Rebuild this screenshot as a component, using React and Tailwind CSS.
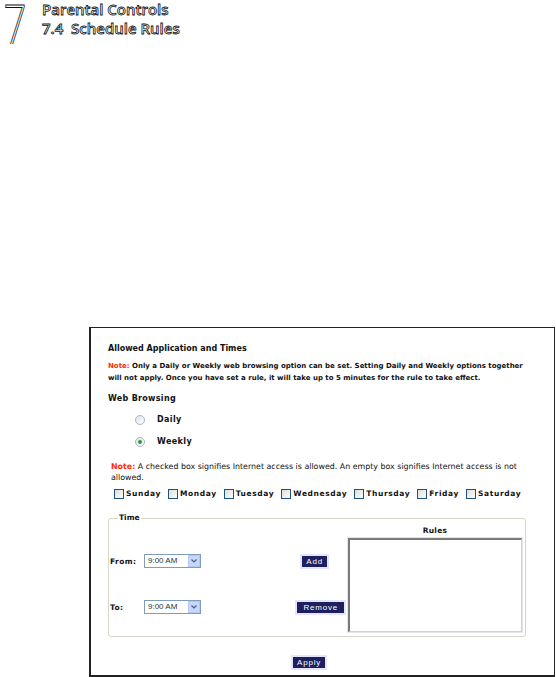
import React from 'react';

const days = ['Sunday', 'Monday', 'Tuesday', 'Wednesday', 'Thursday', 'Friday', 'Saturday'];

function Radio({ checked }) {
  return (
    <span className="w-[10px] h-[10px] rounded-full border border-[#a7b6c8] bg-gradient-to-br from-[#dfe4ea] to-white flex items-center justify-center">
      {checked && <span className="w-[4px] h-[4px] rounded-full bg-[#2f9a34]" />}
    </span>
  );
}

function Checkbox() {
  return <span className="w-[10px] h-[10px] border border-[#1c5180] bg-gradient-to-br from-[#dcdcd7] to-white shrink-0" />;
}

function TimeSelect() {
  return (
    <div className="w-[57px] h-[14px] border border-[#7f9db9] bg-white flex items-center">
      <span className="flex-1 pl-[3px] text-[8px] text-[#333] font-['Liberation_Sans',sans-serif]">9:00 AM</span>
      <span className="w-[12px] h-[12px] bg-[#c6d6fc] border border-[#b6c8f4] flex items-center justify-center">
        <svg width="6" height="4" viewBox="0 0 6 4">
          <path d="M0.5 0.5 L3 3 L5.5 0.5" fill="none" stroke="#4d6185" strokeWidth="1.2" />
        </svg>
      </span>
    </div>
  );
}

function NavyButton({ children, className = '' }) {
  return (
    <div className={`bg-[#e3e6f8] p-[2px] ${className}`}>
      <div className="bg-[#1d1f5e] text-white text-[8px] leading-[11px] font-['Liberation_Sans',sans-serif] tracking-[0.8px] px-[4px]">
        {children}
      </div>
    </div>
  );
}

export default function App() {
  return (
    <div className="w-[556px] h-[677px] bg-white relative overflow-hidden font-['DejaVu_Sans',sans-serif]">
      {/* Chapter header */}
      <div className="flex items-start h-[44px]">
        <div className="w-[30px] h-[44px] overflow-hidden flex justify-center">
          <span className="block text-[56px] leading-[46px] scale-x-[0.72] text-white [-webkit-text-stroke:1px_#111] font-['Open_Sans',sans-serif] font-light">
            7
          </span>
        </div>
        <div className="ml-[12px] font-['Open_Sans',sans-serif] font-semibold text-white [-webkit-text-stroke:0.8px_#111] text-[15px] leading-[19px]">
          <div>Parental Controls</div>
          <div>7.4&nbsp;&nbsp;Schedule Rules</div>
        </div>
      </div>

      {/* Screenshot panel */}
      <div className="absolute left-[89px] top-[327px] w-[466px] h-[350px] border-t border-r border-l-2 border-b-2 border-[#222] pl-[17px] pt-[15px]">
        <div className="text-[8px] leading-[12px] font-bold text-[#111]">Allowed Application and Times</div>

        <div className="mt-[5px] text-[7px] leading-[12px] font-bold text-[#111] w-[418px]">
          <span className="text-[#ff2a00]">Note:</span> Only a Daily or Weekly web browsing option can be set. Setting Daily and Weekly options together will not apply. Once you have set a rule, it will take up to 5 minutes for the rule to take effect.
        </div>

        <div className="mt-[9px] text-[8px] leading-[12px] tracking-[0.3px] font-bold text-[#111]">Web Browsing</div>

        <div className="mt-[9px] ml-[27px] flex flex-col gap-[10px]">
          <div className="flex items-center gap-[12px] h-[12px]">
            <Radio />
            <span className="text-[8px] font-bold tracking-[0.4px] text-[#111]">Daily</span>
          </div>
          <div className="flex items-center gap-[12px] h-[12px]">
            <Radio checked />
            <span className="text-[8px] font-bold tracking-[0.4px] text-[#111]">Weekly</span>
          </div>
        </div>

        <div className="mt-[13px] ml-[3px] text-[7.9px] leading-[11px] text-[#111] w-[414px]">
          <span className="text-[#ff2a00] font-bold">Note:</span> A checked box signifies Internet access is allowed. An empty box signifies Internet access is not allowed.
        </div>

        <div className="mt-[5px] ml-[6px] flex items-center gap-[7px]">
          {days.map((d) => (
            <label key={d} className="flex items-center gap-[2px]">
              <Checkbox />
              <span className="text-[7.5px] font-bold tracking-[0.62px] text-[#111]">{d}</span>
            </label>
          ))}
        </div>

        <fieldset className="mt-[15px] w-[418px] h-[123px] border border-[#d6d6c6] rounded-[3px] pl-[1px] pr-[2px] pb-[3px]">
          <legend className="ml-[8px] px-[1px] text-[7.5px] leading-[8px] font-bold text-[#111]">Time</legend>
          <div className="flex h-full">
            <div className="flex-1 pt-[32px] grid grid-cols-[34px_57px_1fr] grid-rows-[14px_14px] gap-y-[32px] items-center">
              <span className="text-[7.5px] font-bold tracking-[0.4px] text-[#111]">From:</span>
              <TimeSelect />
              <NavyButton className="justify-self-end mr-[18px]">Add</NavyButton>
              <span className="text-[7.5px] font-bold tracking-[0.4px] text-[#111]">To:</span>
              <TimeSelect />
              <NavyButton className="justify-self-end mr-[1px] [&>div]:px-[6px]">Remove</NavyButton>
            </div>
            <div className="w-[176px] flex flex-col items-center">
              <span className="text-[7.5px] leading-[10px] font-bold tracking-[0.3px] text-[#111] mt-[4px]">Rules</span>
              <div className="mt-[1px] w-[176px] h-[97px] border border-[#e2e6ee] bg-white">
                <div className="w-full h-full border-t-2 border-l-2 border-[#7a7a7a] border-r border-b border-r-[#d4d0c8] border-b-[#d4d0c8]" />
              </div>
            </div>
          </div>
        </fieldset>

        <div className="mt-[18px] ml-[183px] w-fit">
          <NavyButton>Apply</NavyButton>
        </div>
      </div>
    </div>
  );
}
